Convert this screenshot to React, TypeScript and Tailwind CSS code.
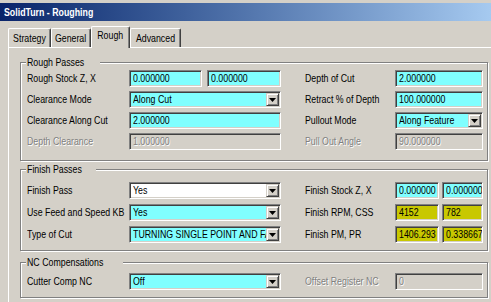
import clsx from 'clsx';

const sunken =
  'border border-t-[#808080] border-l-[#808080] border-b-white border-r-white shadow-[inset_1px_1px_0_#404040,inset_-1px_-1px_0_#d4d0c8]';

const toneBg: Record<string, string> = {
  cyan: 'bg-[#80ffff]',
  yellow: 'bg-[#c8c800]',
  white: 'bg-white',
  off: 'bg-[#d4d0c8]',
};

// the dialog font is narrower than any installed face, so squeeze it
const Txt = ({ children, center = false }: { children: React.ReactNode; center?: boolean }) => (
  <span className={clsx('inline-block whitespace-nowrap scale-x-[0.8]', center ? 'origin-center' : 'origin-left')}>
    {children}
  </span>
);

const Field = ({ value, tone = 'cyan', className = '' }: { value: string; tone?: string; className?: string }) => (
  <div
    className={clsx(
      'h-[17px] flex items-center pl-[3px] overflow-hidden',
      sunken,
      toneBg[tone],
      tone === 'off' && 'text-[#808080] [text-shadow:1px_1px_0_#fff]',
      className
    )}
  >
    <Txt>{value}</Txt>
  </div>
);

const Select = ({ value, tone = 'cyan' }: { value: string; tone?: string }) => (
  <div className={clsx('h-[17px] flex items-center pl-[3px] pr-[1px]', sunken, toneBg[tone])}>
    <span className="flex-1 min-w-0 overflow-hidden">
      <Txt>{value}</Txt>
    </span>
    <div className="w-[13px] h-[13px] shrink-0 bg-[#d4d0c8] border border-t-[#d4d0c8] border-l-[#d4d0c8] border-b-[#404040] border-r-[#404040] shadow-[inset_1px_1px_0_#fff,inset_-1px_-1px_0_#808080] flex items-center justify-center">
      <svg width="7" height="4" viewBox="0 0 7 4">
        <path d="M0 0h7L3.5 4z" fill="#000" />
      </svg>
    </div>
  </div>
);

const Label = ({ text, disabled = false, className = '' }: { text: string; disabled?: boolean; className?: string }) => (
  <div
    className={clsx(
      'shrink-0 flex items-center',
      disabled && 'text-[#808080] [text-shadow:1px_1px_0_#fff]',
      className
    )}
  >
    <Txt>{text}</Txt>
  </div>
);

// one row of the two-column form
const Row = ({
  left,
  leftField,
  right,
  rightField,
  leftDisabled,
  rightDisabled,
}: {
  left: string;
  leftField: React.ReactNode;
  right: string;
  rightField: React.ReactNode;
  leftDisabled?: boolean;
  rightDisabled?: boolean;
}) => (
  <div className="flex h-[17px]">
    <Label text={left} disabled={leftDisabled} className="w-[102px]" />
    <div className="w-[152px] shrink-0">{leftField}</div>
    <div className="w-[24px] shrink-0" />
    <Label text={right} disabled={rightDisabled} className="w-[90px]" />
    <div className="w-[88px] shrink-0">{rightField}</div>
  </div>
);

const Group = ({ title, className, children }: { title: string; className: string; children: React.ReactNode }) => (
  <div
    className={clsx(
      'relative ml-[11px] w-[468px] pl-[6px] border border-[#808080] shadow-[inset_1px_1px_0_#fff,1px_1px_0_#fff]',
      className
    )}
  >
    <span className="absolute -top-[8px] left-[5px] px-[1px] bg-[#d4d0c8] leading-[14px]">
      <Txt>{title}</Txt>
    </span>
    {children}
  </div>
);

const tabs = [
  { name: 'Strategy', w: 'w-[43px]' },
  { name: 'General', w: 'w-[40px]' },
  { name: 'Rough', w: 'w-[39px]', active: true },
  { name: 'Advanced', w: 'w-[51px]' },
];

export default function App() {
  return (
    <div className="w-[491px] h-[302px] overflow-hidden bg-[#d4d0c8] text-black text-[11px] leading-none font-['Liberation_Sans',Arial,sans-serif]">
      {/* Title bar */}
      <div className="mt-[3px] h-[18px] bg-gradient-to-r from-[#0a246a] to-[#a6caf0] flex items-center pl-[4px] text-white font-bold text-[11px]">
        <Txt>SolidTurn - Roughing</Txt>
      </div>

      {/* Tabs */}
      <div className="mt-[5px] pl-[8px] flex items-end h-[21px]">
        {tabs.map(t =>
          t.active ? (
            <div
              key={t.name}
              className={clsx(
                t.w,
                'relative z-10 h-[22px] -mb-px pb-[4px] flex items-center justify-center bg-[#d4d0c8] border-t border-l border-white border-r border-r-[#404040] rounded-t-[2px] shadow-[inset_-1px_0_0_#808080]'
              )}
            >
              <Txt center>{t.name}</Txt>
            </div>
          ) : (
            <div
              key={t.name}
              className={clsx(
                t.w,
                'h-[19px] flex items-center justify-center border-t border-l border-white border-r border-r-[#404040] rounded-t-[2px] shadow-[inset_-1px_0_0_#808080]'
              )}
            >
              <Txt center>{t.name}</Txt>
            </div>
          )
        )}
      </div>

      {/* Tab page */}
      <div className="ml-[8px] w-[490px] h-[260px] border-t border-l border-white">
        <Group title="Rough Passes" className="mt-[14px] pt-[7px] pb-[10px]">
          <div className="flex flex-col gap-[4px]">
            <Row
              left="Rough Stock Z, X"
              leftField={
                <div className="flex gap-[5px]">
                  <Field value="0.000000" className="w-[73px]" />
                  <Field value="0.000000" className="w-[74px]" />
                </div>
              }
              right="Depth of Cut"
              rightField={<Field value="2.000000" />}
            />
            <Row
              left="Clearance Mode"
              leftField={<Select value="Along Cut" />}
              right="Retract % of Depth"
              rightField={<Field value="100.000000" />}
            />
            <Row
              left="Clearance Along Cut"
              leftField={<Field value="2.000000" />}
              right="Pullout Mode"
              rightField={<Select value="Along Feature" />}
            />
            <Row
              left="Depth Clearance"
              leftDisabled
              leftField={<Field value="1.000000" tone="off" />}
              right="Pull Out Angle"
              rightDisabled
              rightField={<Field value="90.000000" tone="off" />}
            />
          </div>
        </Group>

        <Group title="Finish Passes" className="mt-[8px] pt-[12px] pb-[7px]">
          <div className="flex flex-col gap-[5px]">
            <Row
              left="Finish Pass"
              leftField={<Select value="Yes" tone="white" />}
              right="Finish Stock Z, X"
              rightField={
                <div className="flex gap-[3px]">
                  <Field value="0.000000" className="w-[44px]" />
                  <Field value="0.000000" className="w-[41px]" />
                </div>
              }
            />
            <Row
              left="Use Feed and Speed KB"
              leftField={<Select value="Yes" />}
              right="Finish RPM, CSS"
              rightField={
                <div className="flex gap-[3px]">
                  <Field value="4152" tone="yellow" className="w-[44px]" />
                  <Field value="782" tone="yellow" className="w-[41px]" />
                </div>
              }
            />
            <Row
              left="Type of Cut"
              leftField={<Select value="TURNING SINGLE POINT AND FACING" />}
              right="Finish PM, PR"
              rightField={
                <div className="flex gap-[3px]">
                  <Field value="1406.293" tone="yellow" className="w-[44px]" />
                  <Field value="0.338667" tone="yellow" className="w-[41px]" />
                </div>
              }
            />
          </div>
        </Group>

        <Group title="NC Compensations" className="mt-[11px] pt-[10px] pb-[7px]">
          <Row
            left="Cutter Comp NC"
            leftField={<Select value="Off" />}
            right="Offset Register NC"
            rightDisabled
            rightField={<Field value="0" tone="off" />}
          />
        </Group>
      </div>
    </div>
  );
}
